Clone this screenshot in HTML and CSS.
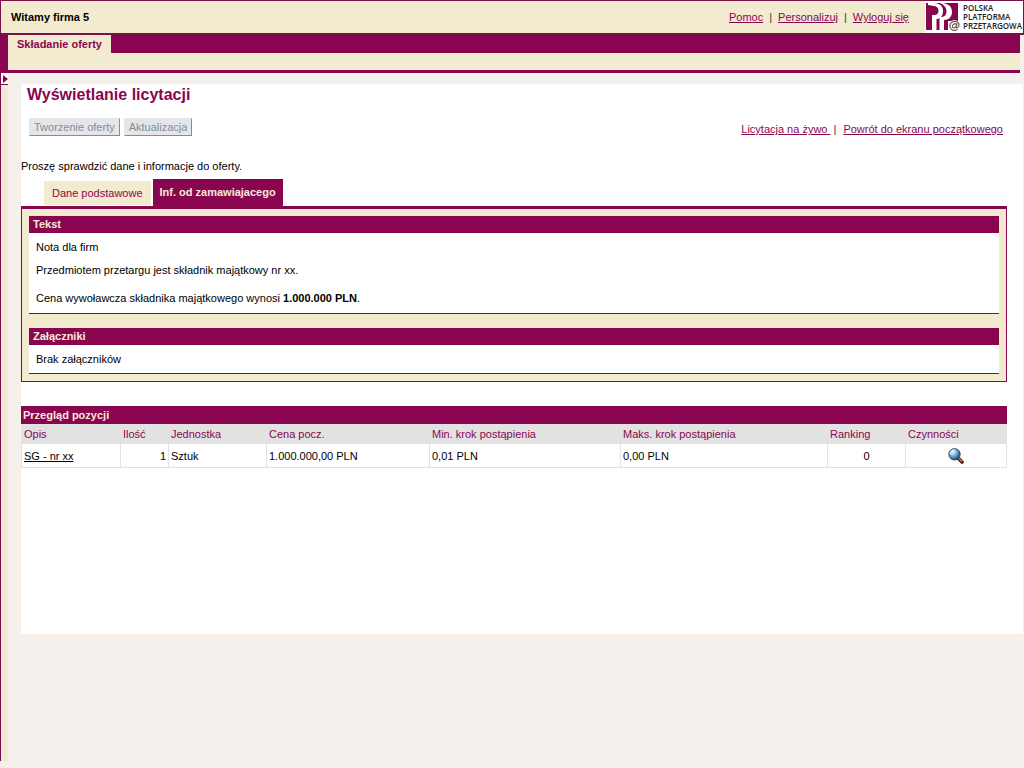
FILE: index.html
```html
<!DOCTYPE html>
<html lang="pl">
<head>
<meta charset="utf-8">
<title>Wyświetlanie licytacji</title>
<link rel="stylesheet" href="styles.css">
</head>
<body>
<header class="topbar">
  <strong class="welcome">Witamy firma 5</strong>
  <nav class="user-links">
    <a href="#">Pomoc</a><span class="sep">|</span><a href="#">Personalizuj</a><span class="sep">|</span><a href="#">Wyloguj się</a>
  </nav>
  <div class="logo">
    <svg class="logo-mark" viewBox="0 0 36 30" aria-hidden="true">
      <path fill="#8a0550" d="M1 2H33V20H23V29H1Z"/>
      <path fill="#fff" d="M3 2H9C15 2.500 18 5 18 10C18 14.500 15.500 18 11.500 18V29H7V14H9C12 14 13.500 12.500 13.500 10C13.500 7 12 5.500 9 5L3 4Z"/>
      <path fill="#fff" d="M15 2H18C24 3 27 6 27 11C27 16 23.500 19 19 19V29H14.500V16H17C20 15.500 21.500 13.500 21.500 10.500C21.500 6.500 19 4 15 2Z"/>
      <circle cx="29.500" cy="24.500" r="5.500" fill="#fff"/>
      <path fill="none" stroke="#6b5f55" stroke-width="1.200" d="M32.500 28.500C28 31 24.500 28 25 24C26 19.500 33 19 34 23.500C34 27 30.500 28 31.200 25.500L32 22.500M31.600 23.500C29.500 21.500 27 24 27.500 26C28.500 28 31 26.500 31.300 24.500"/>
    </svg>
    <span class="logo-text">POLSKA<br>PLATFORMA<br>PRZETARGOWA</span>
  </div>
</header>
<div class="main-nav">
  <div class="nav-tabs"><a class="nav-tab" href="#">Składanie oferty</a></div>
</div>
<div class="workspace">
  <aside class="side">
    <button class="side-toggle" type="button" aria-label="Rozwiń menu"><svg viewBox="0 0 5 8" aria-hidden="true"><path fill="#7d064a" d="M0 0L5 4L0 8Z"/></svg></button>
    <div class="side-strip"></div>
  </aside>
  <main class="page">
    <h1>Wyświetlanie licytacji</h1>
    <div class="toolbar">
      <div class="buttons">
        <button class="btn" type="button" disabled>Tworzenie oferty</button>
        <button class="btn" type="button" disabled>Aktualizacja</button>
      </div>
      <nav class="page-links"><a href="#">Licytacja na żywo&nbsp;</a><span class="sep">|</span><a href="#">Powrót do ekranu początkowego</a></nav>
    </div>
    <p class="hint">Proszę sprawdzić dane i informacje do oferty.</p>
    <div class="tabs">
      <a class="tab" href="#">Dane podstawowe</a>
      <a class="tab tab-active" href="#">Inf. od zamawiajacego</a>
    </div>
    <div class="panel">
      <section class="box">
        <h2>Tekst</h2>
        <div class="box-body">
          <p>Nota dla firm</p>
          <p class="subject">Przedmiotem przetargu jest składnik majątkowy nr xx.</p>
          <p class="price">Cena wywoławcza składnika majątkowego wynosi <b>1.000.000 PLN</b>.</p>
        </div>
      </section>
      <section class="box">
        <h2>Załączniki</h2>
        <div class="box-body box-body-short"><p>Brak załączników</p></div>
      </section>
    </div>
    <table class="items">
      <caption>Przegląd pozycji</caption>
      <colgroup><col class="c-desc"><col class="c-qty"><col class="c-unit"><col class="c-price"><col class="c-min"><col class="c-max"><col class="c-rank"><col class="c-act"></colgroup>
      <thead>
        <tr><th>Opis</th><th>Ilość</th><th>Jednostka</th><th>Cena pocz.</th><th>Min. krok postąpienia</th><th>Maks. krok postąpienia</th><th>Ranking</th><th>Czynności</th></tr>
      </thead>
      <tbody>
        <tr><td><a href="#">SG - nr xx</a></td><td class="num">1</td><td>Sztuk</td><td>1.000.000,00 PLN</td><td>0,01 PLN</td><td>0,00 PLN</td><td class="mid">0</td>
          <td class="mid"><button class="icon-btn" type="button" aria-label="Szczegóły">
            <svg viewBox="0 0 16 16" aria-hidden="true">
              <defs><radialGradient id="lens" cx="0.35" cy="0.3" r="0.7"><stop offset="0" stop-color="#e9f8ff"/><stop offset="0.4" stop-color="#8cc3de"/><stop offset="1" stop-color="#1c4a78"/></radialGradient></defs>
              <path d="M10 10L14 14" stroke="#2b1710" stroke-width="3.600" stroke-linecap="round"/>
              <path d="M10.500 10L13.800 13.300" stroke="#d3603a" stroke-width="1.800" stroke-linecap="round"/>
              <circle cx="6.500" cy="6.300" r="5.700" fill="url(#lens)" stroke="#23435f" stroke-width="0.900"/>
              <path d="M2.500 6A4 4 0 0 1 6.500 2" fill="none" stroke="#fff" stroke-width="1"/>
            </svg></button></td></tr>
      </tbody>
    </table>
  </main>
</div>
</body>
</html>
```
FILE: styles.css
```css
* { box-sizing: border-box; }
body {
  margin: 0;
  min-height: 100vh;
  display: flex;
  flex-direction: column;
  background: #f5f0eb;
  color: #000;
  font: 11px/14px "Liberation Sans", Arial, sans-serif;
}
h1, h2, p { margin: 0; }
a { color: #8a0550; }
button { font: inherit; }

.topbar {
  display: flex;
  align-items: center;
  height: 35px;
  padding-left: 10px;
  background: #f3ebd0;
  border: 1px solid #7a1048;
  border-bottom-width: 2px;
}
.welcome { flex: 1; }
.user-links { margin-right: 16px; }
.user-links .sep { margin: 0 6px; }
.sep { color: #333; }
.logo {
  display: flex;
  width: 98px;
  height: 32px;
  background: #fff;
}
.logo-mark { width: 36px; height: 30px; flex: none; }
.logo-text {
  padding-top: 2px;
  margin-left: 2px;
  font: 600 8px/9px "Open Sans", sans-serif;
  color: #222;
}

.main-nav {
  margin-right: 4px;
  padding-bottom: 17px;
  background: #f3ebd0;
  border-left: 8px solid #8a0550;
  border-bottom: 3px solid #8a0550;
}
.nav-tabs { height: 18px; background: #8a0550; }
.nav-tab {
  display: inline-block;
  height: 18px;
  padding: 0 9px;
  line-height: 19px;
  background: #f3ebd0;
  font-weight: bold;
  text-decoration: none;
}

.workspace { flex: 1; display: flex; }
.side {
  display: flex;
  flex-direction: column;
  width: 8px;
  margin-right: 13px;
  padding-bottom: 7px;
}
.side-toggle {
  display: flex;
  align-items: center;
  height: 12px;
  padding: 0 0 0 2px;
  background: #fff;
  border: solid #8a0550;
  border-width: 0 0 1px 1px;
}
.side-toggle svg { width: 5px; height: 8px; flex: none; }
.side-strip {
  flex: 1;
  background: linear-gradient(to right, #fbe6dc, #f3ebd0 50%);
  border-left: 1px solid #7a1048;
}

.page {
  flex: 1;
  align-self: flex-start;
  min-height: 550px;
  margin: 11px 1px 0 0;
  padding-right: 16px;
  background: #fff;
}
h1 {
  padding: 1px 6px 0;
  font-size: 16px;
  line-height: 20px;
  color: #8a0550;
}
.toolbar {
  display: flex;
  justify-content: space-between;
  margin-top: 13px;
  padding: 0 4px 0 8px;
}
.buttons { display: flex; gap: 4px; }
.btn {
  height: 18px;
  padding: 0 4px;
  background: #e4e6ea;
  border: 1px solid #e4e6ea;
  border-right-color: #858c98;
  border-bottom-color: #858c98;
  color: #858c98;
}
.page-links { padding-top: 4px; }
.page-links .sep { margin: 0 7px 0 3px; }
.hint { margin-top: 23px; }

.tabs {
  display: flex;
  align-items: center;
  gap: 2px;
  height: 27px;
  margin-top: 6px;
  padding-left: 23px;
}
.tab {
  padding: 0 8px;
  line-height: 24px;
  background: #f3ebd0;
  text-decoration: none;
}
.tab-active {
  padding: 0 7px;
  line-height: 27px;
  background: #8a0550;
  color: #f8e9dc;
  font-weight: bold;
}
.panel {
  display: flex;
  flex-direction: column;
  gap: 14px;
  padding: 7px;
  background: #f3ebd0;
  border: 1px solid #8a0550;
  border-top-width: 3px;
}
.box { background: #fff; border-bottom: 1px solid #8a0550; }
h2, caption {
  background: #8a0550;
  color: #f8e9dc;
  font-size: 11px;
  font-weight: bold;
  text-align: left;
}
h2 { padding: 0 4px; line-height: 17px; }
.box-body { padding: 7px 7px 8px; }
.box-body-short { padding-bottom: 7px; }
.subject { margin-top: 9px; }
.price { margin-top: 14px; }

.items {
  width: 100%;
  margin-top: 24px;
  table-layout: fixed;
  border-collapse: separate;
  border-spacing: 0;
}
caption { padding: 0 2px; line-height: 18px; }
th {
  height: 20px;
  padding: 0 2px;
  background: #e2e2e2;
  color: #8a0550;
  font-weight: normal;
  text-align: left;
}
th:first-child { padding-left: 3px; }
td {
  height: 24px;
  padding: 0 2px;
  border: solid #e2e2e2;
  border-width: 0 1px 1px 0;
}
td:first-child { border-left-width: 1px; }
td a { color: #000; }
.num { text-align: right; }
.mid { text-align: center; }
.c-desc { width: 100px; }
.c-qty { width: 48px; }
.c-unit { width: 98px; }
.c-price { width: 163px; }
.c-min { width: 191px; }
.c-max { width: 21%; }
.c-rank { width: 78px; }
.icon-btn {
  display: block;
  width: 16px;
  height: 16px;
  margin: 0 auto;
  padding: 0;
  background: none;
  border: 0;
}
.icon-btn svg { display: block; width: 16px; height: 16px; }
```
